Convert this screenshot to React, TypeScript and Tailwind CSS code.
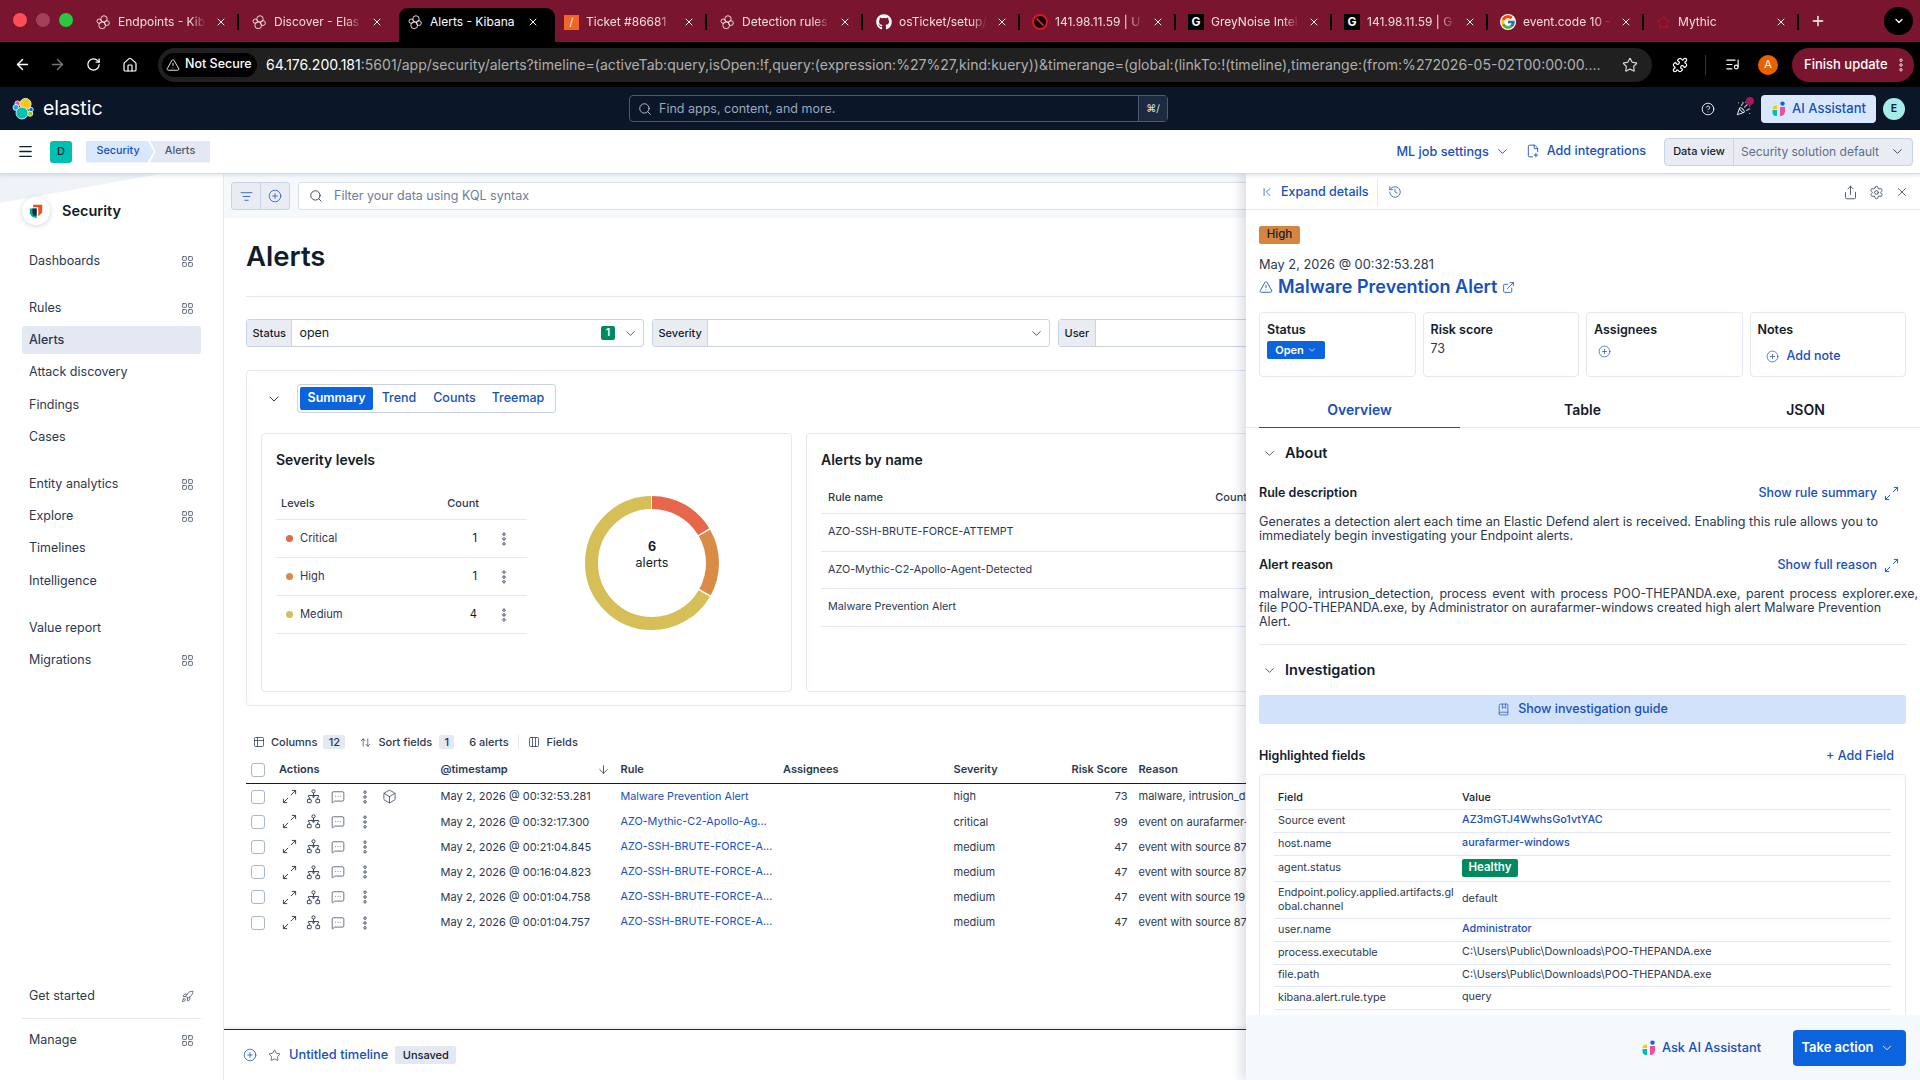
import { ReactNode } from "react";
import {
  AlertTriangle,
  ArrowDown,
  ArrowLeft,
  ArrowRight,
  ArrowUpDown,
  BookMarked,
  Box,
  ChevronDown,
  ChevronFirst,
  CircleHelp,
  CirclePlus,
  Columns3,
  ExternalLink,
  FilePlus2,
  History,
  Home,
  LayoutGrid,
  ListFilter,
  ListMusic,
  Menu,
  MessageSquareMore,
  PartyPopper,
  Plus,
  Puzzle,
  RotateCw,
  Rocket,
  Search,
  Settings,
  Share,
  Star,
  Table2,
  X,
} from "lucide-react";
import { FaGithub } from "react-icons/fa";
import { FcGoogle } from "react-icons/fc";

function Dots({ className = "" }: { className?: string }) {
  return (
    <svg viewBox="0 0 6 16" className={`h-[14px] w-[6px] ${className}`} fill="none" stroke="currentColor" strokeWidth="1">
      <circle cx="3" cy="2.5" r="1.4" />
      <circle cx="3" cy="8" r="1.4" />
      <circle cx="3" cy="13.5" r="1.4" />
    </svg>
  );
}

function ExpandIcon({ className = "" }: { className?: string }) {
  return (
    <svg viewBox="0 0 16 16" className={`h-[15px] w-[15px] ${className}`} fill="none" stroke="currentColor" strokeWidth="1">
      <path d="M9.5 6.5 14.5 1.5M10.5 1.5h4v4M6.5 9.5l-5 5M1.5 10.5v4h4" />
    </svg>
  );
}

function AnalyzeIcon() {
  return (
    <svg viewBox="0 0 16 16" className="h-[15px] w-[15px]" fill="none" stroke="currentColor" strokeWidth="1">
      <circle cx="8" cy="2.5" r="1.7" />
      <path d="M8 4.2v2.6M2.5 8.5V7h11v1.5" />
      <circle cx="8" cy="8.2" r=".8" />
      <rect x="1.5" y="11" width="4" height="3.6" rx=".6" />
      <rect x="10.5" y="11" width="4" height="3.6" rx=".6" />
      <path d="M3.5 8.6V11M12.5 8.6V11" />
    </svg>
  );
}

function ElasticTabIcon() {
  return (
    <svg viewBox="0 0 16 16" className="h-[15px] w-[15px] shrink-0 text-[#f3dfe5]" fill="none" stroke="currentColor" strokeWidth="1">
      <circle cx="8.5" cy="4.2" r="3.4" />
      <circle cx="3.4" cy="6.6" r="2.3" />
      <circle cx="11.6" cy="8.6" r="2.6" />
      <circle cx="6.6" cy="11" r="3.6" />
    </svg>
  );
}

function ElasticLogo() {
  return (
    <svg viewBox="0 0 24 26" className="h-[26px] w-[24px]" stroke="#ffffff" strokeWidth=".8">
      <circle cx="5.5" cy="7.5" r="2.6" fill="#f04e98" />
      <circle cx="4" cy="11.5" r="3" fill="#1ba9f5" />
      <circle cx="18" cy="17.5" r="2.8" fill="#93c90e" />
      <circle cx="19" cy="13.5" r="2.2" fill="#0077cc" />
      <circle cx="13.5" cy="8" r="5.6" fill="#fec514" />
      <circle cx="10" cy="17" r="6" fill="#00bfb3" />
    </svg>
  );
}

function SecurityLogo() {
  return (
    <svg viewBox="40 36 42 46" className="h-[15px] w-[14px]">
      <path d="M52 38H80V62L68 74V46H52Z" fill="#f04e23" />
      <path d="M42 50H63V80L48 74 42 64Z" fill="#00a69b" />
      <path d="M50 50H63V72H53L50 62Z" fill="#1d2a3e" />
    </svg>
  );
}

function AiIcon() {
  return (
    <svg viewBox="0 0 16 16" className="h-[16px] w-[16px] shrink-0">
      <circle cx="11.5" cy="2.6" r="2.2" fill="#0b64dd" />
      <path d="M1.5 8c0-2 1.3-3.6 3.4-3.6H6V8z" fill="#fec514" />
      <path d="M1.5 9H6v6H4.7c-1.8 0-3.2-1.4-3.2-3.2z" fill="#00bfb3" />
      <path d="M9 6h5v4.5a4.5 4.5 0 0 1-4.5 4.5H9z" fill="#f04e98" />
    </svg>
  );
}

const browserTabs = [
  { title: "Endpoints - Kib", icon: <ElasticTabIcon />, sep: true },
  { title: "Discover - Elas", icon: <ElasticTabIcon /> },
  { title: "Alerts - Kibana", icon: <ElasticTabIcon />, active: true },
  { title: "Ticket #86681", icon: <div className="h-[15px] w-[15px] shrink-0 bg-[#f26522] text-center text-[11px] leading-[15px] text-white">/</div>, sep: true },
  { title: "Detection rules", icon: <ElasticTabIcon />, sep: true },
  { title: "osTicket/setup/", icon: <FaGithub className="h-[16px] w-[16px] shrink-0 text-white" />, sep: true },
  { title: "141.98.11.59 | U", icon: <div className="flex h-[16px] w-[16px] shrink-0 items-center justify-center rounded-full border-2 border-[#e0161d] bg-black"><div className="h-[2px] w-[10px] rotate-45 bg-[#e0161d]" /></div>, sep: true },
  { title: "GreyNoise Intel", icon: <div className="h-[16px] w-[16px] shrink-0 bg-black text-center text-[12px] font-bold leading-[16px] text-white">G</div>, sep: true },
  { title: "141.98.11.59 | G", icon: <div className="h-[16px] w-[16px] shrink-0 bg-black text-center text-[12px] font-bold leading-[16px] text-white">G</div>, sep: true },
  { title: "event.code 10 -", icon: <FcGoogle className="h-[16px] w-[16px] shrink-0 rounded-full bg-white" />, sep: true },
  { title: "Mythic", icon: <Star className="h-[15px] w-[15px] shrink-0 text-[#b3142e]" strokeWidth={1.5} />, sep: true },
];

function TabStrip() {
  return (
    <div className="flex h-[42px] shrink-0 items-center bg-[#7a1530] pl-[13px]">
      <div className="flex w-[74px] shrink-0 items-center gap-[9px] pb-[2px]">
        <div className="h-[14px] w-[14px] rounded-full bg-[#ff4d57]" />
        <div className="h-[14px] w-[14px] rounded-full bg-[#a2405c]" />
        <div className="h-[14px] w-[14px] rounded-full bg-[#28c840]" />
      </div>
      {browserTabs.map((t, i) => (
        <div
          key={i}
          className={`flex h-[34px] w-[156px] shrink-0 items-center self-end pb-[6px] pl-[9px] pr-[3px] text-[12px] ${t.active ? "rounded-t-[9px] bg-black text-white" : "text-[#f2dde3]"}`}
        >
          {t.icon}
          <span className={`ml-[7px] w-[88px] overflow-hidden whitespace-nowrap ${t.active ? "" : "[mask-image:linear-gradient(to_right,black_82%,transparent)]"}`}>{t.title}</span>
          <X className="ml-[9px] h-[12px] w-[12px] shrink-0 text-white" strokeWidth={2} />
          <div className={`ml-[10px] h-[16px] w-[1.5px] shrink-0 ${t.sep ? "bg-black" : ""}`} />
        </div>
      ))}
      <Plus className="ml-[7px] h-[16px] w-[16px] text-white" strokeWidth={2} />
      <div className="ml-[58px] flex h-[28px] w-[29px] shrink-0 items-center justify-center rounded-full bg-black">
        <ChevronDown className="h-[12px] w-[12px] text-white" strokeWidth={2.5} />
      </div>
    </div>
  );
}

function Toolbar() {
  return (
    <div className="flex h-[45px] shrink-0 items-center bg-black pl-[14px] pr-[6px]">
      <ArrowLeft className="h-[17px] w-[17px] text-white" strokeWidth={2} />
      <ArrowRight className="ml-[18px] h-[17px] w-[17px] text-[#777]" strokeWidth={2} />
      <RotateCw className="ml-[20px] h-[15px] w-[15px] text-white" strokeWidth={2} />
      <Home className="ml-[21px] h-[16px] w-[16px] text-white" strokeWidth={1.8} />
      <div className="ml-[20px] flex h-[34px] w-[1494px] items-center rounded-full bg-[#202020] pl-[4px] pr-[14px]">
        <div className="flex h-[24px] w-[95px] shrink-0 items-center gap-[5px] rounded-full bg-black pl-[4px] text-[12.5px] font-medium text-white">
          <AlertTriangle className="h-[14px] w-[14px]" strokeWidth={1.5} />
          Not Secure
        </div>
        <div className="ml-[9px] flex-1 overflow-hidden whitespace-nowrap text-[14.05px] text-[#aeaeae]">
          <span className="text-white">64.176.200.181</span>:5601/app/security/alerts?timeline=(activeTab:query,isOpen:!f,query:(expression:%27%27,kind:kuery))&amp;timerange=(global:(linkTo:!(timeline),timerange:(from:%272026-05-02T00:00:00....
        </div>
        <Star className="ml-[16px] h-[16px] w-[16px] shrink-0 text-[#d0d0d0]" strokeWidth={1.8} />
      </div>
      <Puzzle className="ml-[20px] h-[16px] w-[16px] text-white" strokeWidth={1.8} />
      <div className="ml-[17px] h-[20px] w-px bg-[#7a1530]" />
      <ListMusic className="ml-[19px] h-[15px] w-[15px] text-white" strokeWidth={1.8} />
      <div className="ml-[18px] flex h-[20px] w-[20px] items-center justify-center rounded-full bg-[#ea6100] text-[11px] text-white">A</div>
      <div className="ml-[14px] flex h-[34px] w-[122px] items-center justify-between rounded-full bg-[#7a1530] pl-[12px] pr-[10px] text-[13px] font-medium text-white">
        Finish update
        <Dots className="text-white" />
      </div>
    </div>
  );
}

function ElasticHeader() {
  return (
    <div className="flex h-[43px] shrink-0 items-center bg-[#0b1628] pl-[12px] pr-[14px]">
      <div className="flex w-[617px] shrink-0 items-center gap-[7px]">
        <ElasticLogo />
        <span className="text-[19.5px] leading-none text-white">elastic</span>
      </div>
      <div className="flex h-[27px] w-[539px] items-center rounded-[4px] border border-[#4a5a75] bg-[#0b1628] pl-[8px] text-[12.5px] text-[#9aa8bd]">
        <Search className="h-[14px] w-[14px] text-[#c3ccd9]" strokeWidth={1.5} />
        <span className="ml-[7px] flex-1 pt-[1px]">Find apps, content, and more.</span>
        <div className="flex h-full w-[29px] items-center justify-center border-l border-[#4a5a75] bg-[#1d2a3f] text-[10px] text-[#dfe5ef]">⌘/</div>
      </div>
      <CircleHelp className="ml-[533px] h-[14px] w-[14px] text-white" strokeWidth={1.5} />
      <div className="relative ml-[21px]">
        <PartyPopper className="h-[15px] w-[15px] text-white" strokeWidth={1.5} />
        <div className="absolute -right-[3px] -top-[4px] h-[8px] w-[8px] rounded-full bg-[#a6175a]" />
      </div>
      <div className="ml-[10px] flex h-[28px] w-[115px] items-center justify-center gap-[5px] rounded-[4px] bg-[#d9e8ff] text-[13px] font-medium text-[#1750ba]">
        <AiIcon />
        AI Assistant
      </div>
      <div className="ml-[7px] flex h-[22px] w-[22px] items-center justify-center rounded-full bg-[#a6edea] text-[10.5px] font-semibold text-[#111c2c]">E</div>
    </div>
  );
}

function BreadcrumbBar() {
  return (
    <div className="relative z-10 flex h-[44px] shrink-0 items-center border-b border-[#d3dae6] bg-white pl-[17px] pr-[7px] shadow-[0_2px_3px_rgba(60,80,120,0.12)]">
      <Menu className="h-[17px] w-[17px] text-[#111c2c]" strokeWidth={1.8} />
      <div className="ml-[16px] flex h-[22px] w-[22px] items-center justify-center rounded-[3px] bg-[#00bfb3] text-[11px] font-medium text-[#111c2c]">D</div>
      <div className="ml-[14px] flex h-[22px] w-[68px] items-center justify-center bg-[#d9e8ff] pr-[4px] text-[10.8px] font-medium text-[#1750ba] [clip-path:polygon(0_0,90%_0,100%_50%,90%_100%,0_100%)]">Security</div>
      <div className="-ml-[4px] flex h-[22px] w-[60px] items-center justify-center bg-[#e3e8f2] text-[10.8px] font-medium text-[#485975] [clip-path:polygon(0_0,100%_0,100%_100%,0_100%,9%_50%)]">Alerts</div>
      <div className="ml-auto flex items-center text-[12.7px] font-medium text-[#1750ba]">
        ML job settings
        <ChevronDown className="ml-[6px] h-[15px] w-[15px]" strokeWidth={1.5} />
        <FilePlus2 className="ml-[16px] h-[14px] w-[14px]" strokeWidth={1.5} />
        <span className="ml-[7px] text-[12.6px]">Add integrations</span>
      </div>
      <div className="ml-[18px] flex h-[28px] w-[249px] items-center rounded-[4px] border border-[#cad3e2] bg-[#e9edf3] text-[12px]">
        <div className="flex h-full w-[69px] items-center justify-center border-r border-[#cad3e2] text-[11px] font-medium text-[#111c2c]">Data view</div>
        <span className="ml-[7px] flex-1 whitespace-nowrap text-[#5a6d8c]">Security solution default</span>
        <ChevronDown className="mr-[7px] h-[15px] w-[15px] text-[#344054]" strokeWidth={1.5} />
      </div>
    </div>
  );
}

function NavItem({ label, grid, active, icon }: { label: string; grid?: boolean; active?: boolean; icon?: ReactNode }) {
  return (
    <div className={`mx-[22px] flex h-[32.3px] items-center justify-between pl-[7px] pr-[7px] text-[12.5px] text-[#2b394f] ${active ? "relative" : ""}`}>
      {active && <div className="absolute inset-x-0 top-[2px] h-[28px] rounded-[3px] bg-[#e3e8f2]" />}
      <span className={active ? "relative font-medium" : ""}>{label}</span>
      {grid && <LayoutGrid className="h-[13px] w-[13px] text-[#2b394f]" strokeWidth={1.3} />}
      {icon}
    </div>
  );
}

function Sidebar() {
  return (
    <div className="relative flex h-full w-[224px] shrink-0 flex-col border-r border-[#e3e8f2] bg-white">
      <svg viewBox="0 0 160 30" className="absolute left-0 top-0 h-[30px] w-[160px]">
        <polygon points="0,0 159,0 0,29" fill="#eff2f7" />
      </svg>
      <div className="relative mt-[23px] flex h-[28px] items-center pl-[22px]">
        <div className="flex h-[28px] w-[28px] items-center justify-center rounded-full bg-white shadow-[0_1px_5px_rgba(60,80,120,0.25)]">
          <SecurityLogo />
        </div>
        <span className="ml-[12px] text-[14.5px] font-semibold text-[#111c2c]">Security</span>
      </div>
      <div className="mt-[20px] flex flex-col gap-[14.6px]">
        <div>
          <NavItem label="Dashboards" grid />
        </div>
        <div>
          <NavItem label="Rules" grid />
          <NavItem label="Alerts" active />
          <NavItem label="Attack discovery" />
          <NavItem label="Findings" />
          <NavItem label="Cases" />
        </div>
        <div>
          <NavItem label="Entity analytics" grid />
          <NavItem label="Explore" grid />
          <NavItem label="Timelines" />
          <NavItem label="Intelligence" />
        </div>
        <div>
          <NavItem label="Value report" />
          <NavItem label="Migrations" grid />
        </div>
      </div>
      <div className="mt-auto pb-[23px]">
        <NavItem label="Get started" icon={<Rocket className="h-[13px] w-[13px] text-[#2b394f]" strokeWidth={1.3} />} />
        <div className="mx-[22px] my-[5.5px] h-px bg-[#e3e8f2]" />
        <NavItem label="Manage" grid />
      </div>
    </div>
  );
}

function FilterSelect({ label, value, count }: { label: string; value?: string; count?: number }) {
  return (
    <div className="flex h-[28px] w-[398px] shrink-0 items-center rounded-[3px] border border-[#cad3e2] bg-white">
      <div className="flex h-full shrink-0 items-center border-r border-[#cad3e2] bg-[#e9edf3] px-[5.5px] text-[11px] font-medium text-[#111c2c]">{label}</div>
      <span className="ml-[7px] flex-1 text-[12.5px] text-[#111c2c]">{value}</span>
      {count && <div className="mr-[8px] flex h-[14px] w-[14px] items-center justify-center rounded-[2px] bg-[#008a5e] text-[10.5px] font-semibold text-white">{count}</div>}
      <ChevronDown className="mr-[5px] h-[15px] w-[15px] text-[#2b394f]" strokeWidth={1.3} />
    </div>
  );
}

const levels = [
  { name: "Critical", count: 1, color: "bg-[#e7664c]" },
  { name: "High", count: 1, color: "bg-[#da8b45]" },
  { name: "Medium", count: 4, color: "bg-[#d6bf57]" },
];

function Donut() {
  const r = 60.5;
  const c = 2 * Math.PI * r;
  const segs = [
    { from: 0, size: 1 / 6, color: "#e7664c" },
    { from: 1 / 6, size: 1 / 6, color: "#da8b45" },
    { from: 2 / 6, size: 4 / 6, color: "#d6bf57" },
  ];
  return (
    <div className="relative h-[134px] w-[134px]">
      <svg viewBox="0 0 134 134" className="h-[134px] w-[134px] -rotate-90">
        {segs.map((s) => (
          <circle
            key={s.color}
            cx="67"
            cy="67"
            r={r}
            fill="none"
            stroke={s.color}
            strokeWidth="13"
            strokeDasharray={`${s.size * c - 1.5} ${c}`}
            strokeDashoffset={-s.from * c}
          />
        ))}
      </svg>
      <div className="absolute inset-0 flex flex-col items-center justify-center pb-[17px] text-[#111c2c]">
        <span className="text-[12.5px] font-bold leading-[16px]">6</span>
        <span className="text-[12.5px] leading-[16px]">alerts</span>
      </div>
    </div>
  );
}

function SeverityPanel() {
  return (
    <div className="flex h-[259px] w-[531px] shrink-0 rounded-[4px] border border-[#e3e8f2] pl-[14px] pr-[14px]">
      <div className="w-[251px] shrink-0">
        <div className="mt-[16px] text-[14px] font-semibold leading-[20px] text-[#111c2c]">Severity levels</div>
        <div className="mt-[21px] flex h-[29px] items-center border-b border-[#e3e8f2] pb-[4px] text-[11px] font-medium text-[#2b394f]">
          <span className="ml-[5px] flex-1">Levels</span>
          <span className="mr-[48px]">Count</span>
        </div>
        {levels.map((l) => (
          <div key={l.name} className="flex h-[38px] items-center border-b border-[#e3e8f2] text-[11.2px] text-[#2b394f]">
            <div className={`ml-[10px] h-[7px] w-[7px] rounded-full ${l.color}`} />
            <span className="ml-[7px] flex-1">{l.name}</span>
            <span className="mr-[24px] text-[#111c2c]">{l.count}</span>
            <Dots className="mr-[20px] text-[#2b394f]" />
          </div>
        ))}
      </div>
      <div className="ml-[58px] mt-[62px]">
        <Donut />
      </div>
    </div>
  );
}

const ruleNames = ["AZO-SSH-BRUTE-FORCE-ATTEMPT", "AZO-Mythic-C2-Apollo-Agent-Detected", "Malware Prevention Alert"];

function AlertsByName() {
  return (
    <div className="h-[259px] w-[560px] shrink-0 rounded-[4px] border border-[#e3e8f2] pl-[14px] pr-[14px]">
      <div className="mt-[16px] text-[14px] font-semibold leading-[20px] text-[#111c2c]">Alerts by name</div>
      <div className="mt-[16px] flex h-[28px] items-center justify-between border-b border-[#e3e8f2] pb-[4px] pl-[7px] text-[11px] font-medium text-[#2b394f]">
        <span>Rule name</span>
        <span className="mr-[104px]">Count</span>
      </div>
      {ruleNames.map((n) => (
        <div key={n} className="flex h-[37.5px] items-center border-b border-[#e3e8f2] pl-[7px] text-[10.8px] text-[#2b394f]">
          {n}
        </div>
      ))}
    </div>
  );
}

const rows = [
  { time: "May 2, 2026 @ 00:32:53.281", rule: "Malware Prevention Alert", sev: "high", score: 73, reason: "malware, intrusion_d", extra: true },
  { time: "May 2, 2026 @ 00:32:17.300", rule: "AZO-Mythic-C2-Apollo-Ag...", sev: "critical", score: 99, reason: "event on aurafarmer-" },
  { time: "May 2, 2026 @ 00:21:04.845", rule: "AZO-SSH-BRUTE-FORCE-A...", sev: "medium", score: 47, reason: "event with source 87" },
  { time: "May 2, 2026 @ 00:16:04.823", rule: "AZO-SSH-BRUTE-FORCE-A...", sev: "medium", score: 47, reason: "event with source 87" },
  { time: "May 2, 2026 @ 00:01:04.758", rule: "AZO-SSH-BRUTE-FORCE-A...", sev: "medium", score: 47, reason: "event with source 19" },
  { time: "May 2, 2026 @ 00:01:04.757", rule: "AZO-SSH-BRUTE-FORCE-A...", sev: "medium", score: 47, reason: "event with source 87" },
];

function Checkbox() {
  return <div className="ml-[5px] h-[14px] w-[14px] shrink-0 rounded-[3px] border border-[#aab6c9] bg-white" />;
}

function IconCell({ children, className = "" }: { children: ReactNode; className?: string }) {
  return <div className={`flex w-[24.5px] shrink-0 justify-center ${className}`}>{children}</div>;
}

function AlertsTable() {
  return (
    <div className="mt-[29px] text-[11px] text-[#111c2c]">
      <div className="flex h-[14px] items-center pl-[7px] font-medium text-[#2b394f]">
        <Table2 className="h-[12px] w-[12px]" strokeWidth={1.5} />
        <span className="ml-[6px]">Columns</span>
        <span className="ml-[6px] flex h-[14px] w-[22px] items-center justify-center rounded-[2px] bg-[#e3e8f2]">12</span>
        <ArrowUpDown className="ml-[15px] h-[11px] w-[11px]" strokeWidth={1.5} />
        <span className="ml-[7px]">Sort fields</span>
        <span className="ml-[7px] flex h-[14px] w-[15px] items-center justify-center rounded-[2px] bg-[#e3e8f2]">1</span>
        <span className="ml-[15px]">6 alerts</span>
        <div className="ml-[9px] h-[14px] w-px bg-[#e3e8f2]" />
        <Columns3 className="ml-[9px] h-[12px] w-[12px]" strokeWidth={1.5} />
        <span className="ml-[7px]">Fields</span>
      </div>
      <div className="mt-[7px] flex h-[28px] items-center border-b-[1.5px] border-[#111c2c] font-semibold text-[#2b394f]">
        <Checkbox />
        <div className="ml-[14px] w-[161.5px] shrink-0">Actions</div>
        <div className="flex w-[180px] shrink-0 items-center justify-between pr-[11px]">
          @timestamp
          <ArrowDown className="h-[13px] w-[13px]" strokeWidth={1.5} />
        </div>
        <div className="w-[162.5px] shrink-0">Rule</div>
        <div className="w-[170.5px] shrink-0">Assignees</div>
        <div className="w-[114px] shrink-0">Severity</div>
        <div className="w-[60px] shrink-0 whitespace-nowrap text-right">Risk Score</div>
        <div className="ml-[11px]">Reason</div>
      </div>
      {rows.map((r) => (
        <div key={r.time} className="flex h-[25.2px] items-center text-[#2b394f]">
          <Checkbox />
          <div className="ml-[12px] flex w-[163.5px] shrink-0 items-center">
            <IconCell><ExpandIcon className="w-[13px]" /></IconCell>
            <IconCell><AnalyzeIcon /></IconCell>
            <IconCell><MessageSquareMore className="h-[14px] w-[14px]" strokeWidth={1.2} /></IconCell>
            <IconCell className="ml-[2px]"><Dots /></IconCell>
            {r.extra && <IconCell><Box className="h-[15px] w-[15px]" strokeWidth={1.2} /></IconCell>}
          </div>
          <div className="w-[180px] shrink-0">{r.time}</div>
          <div className="w-[162.5px] shrink-0 whitespace-nowrap text-[10.8px] text-[#1750ba]">{r.rule}</div>
          <div className="w-[170.5px] shrink-0" />
          <div className="w-[114px] shrink-0">{r.sev}</div>
          <div className="w-[60px] shrink-0 text-right">{r.score}</div>
          <div className="ml-[11px] whitespace-nowrap">{r.reason}</div>
        </div>
      ))}
    </div>
  );
}

function MainContent() {
  return (
    <div className="flex h-full min-w-0 flex-1 flex-col overflow-hidden">
      <div className="flex h-[44px] shrink-0 items-center bg-[#f6f9fc] pl-[7px]">
        <div className="flex h-[28px] w-[59px] items-center rounded-[3px] border border-[#cad3e2] bg-[#e9edf3] text-[#1750ba]">
          <div className="flex h-full w-[29px] items-center justify-center border-r border-[#cad3e2]">
            <ListFilter className="h-[13px] w-[13px]" strokeWidth={1.5} />
          </div>
          <div className="flex flex-1 items-center justify-center">
            <CirclePlus className="h-[14px] w-[14px]" strokeWidth={1.3} />
          </div>
        </div>
        <div className="ml-[8px] flex h-[28px] flex-1 items-center rounded-[3px] border border-[#d9e0ea] bg-white pl-[10px]">
          <Search className="h-[14px] w-[14px] text-[#2b394f]" strokeWidth={1.5} />
          <span className="ml-[11px] text-[12.5px] text-[#6c7d98]">Filter your data using KQL syntax</span>
        </div>
      </div>
      <div className="flex-1 pl-[22px] pr-[18px]">
        <h1 className="mt-[22px] text-[27.5px] font-semibold leading-[32px] text-[#111c2c]">Alerts</h1>
        <div className="mt-[24px] h-px bg-[#e3e8f2]" />
        <div className="mt-[22px] flex gap-[8px]">
          <FilterSelect label="Status" value="open" count={1} />
          <FilterSelect label="Severity" />
          <FilterSelect label="User" />
        </div>
        <div className="mt-[23px] h-[336px] rounded-[4px] border border-[#e3e8f2] pl-[14px]">
          <div className="mt-[13px] flex items-center">
            <ChevronDown className="ml-[5px] h-[16px] w-[16px] text-[#111c2c]" strokeWidth={1.3} />
            <div className="ml-[15px] flex h-[29px] items-center rounded-[3px] border border-[#cad3e2] p-[2px] pr-[3px] text-[12.5px] font-medium text-[#1750ba]">
              <div className="flex h-full w-[73px] items-center justify-center rounded-[2px] bg-[#0b64dd] font-semibold text-white">Summary</div>
              <div className="flex h-full w-[52px] items-center justify-center">Trend</div>
              <div className="flex h-[23px] w-[59px] items-center justify-center">Counts</div>
              <div className="flex h-[23px] w-[68px] items-center justify-center">Treemap</div>
            </div>
          </div>
          <div className="mt-[20px] flex gap-[14px]">
            <SeverityPanel />
            <AlertsByName />
          </div>
        </div>
        <AlertsTable />
      </div>
      <div className="flex h-[51px] shrink-0 items-center border-t-[1.5px] border-[#1d2a3e] bg-white pl-[19px] text-[12.8px] shadow-[0_-2px_3px_rgba(60,80,120,0.1)]">
        <CirclePlus className="h-[14px] w-[14px] text-[#1750ba]" strokeWidth={1.3} />
        <Star className="ml-[11px] h-[13px] w-[13px] text-[#2b394f]" strokeWidth={1.3} />
        <span className="ml-[8px] font-medium text-[#1750ba]">Untitled timeline</span>
        <span className="ml-[7px] flex h-[18px] w-[61px] items-center justify-center rounded-[2px] bg-[#e3e8f2] text-[11px] font-medium text-[#111c2c]">Unsaved</span>
      </div>
    </div>
  );
}

const highlighted: { field: ReactNode; value: ReactNode; link?: boolean; h: string }[] = [
  { field: "Source event", value: "AZ3mGTJ4WwhsGo1vtYAC", link: true, h: "h-[23px]" },
  { field: "host.name", value: "aurafarmer-windows", link: true, h: "h-[23px]" },
  { field: "agent.status", value: <span className="flex h-[18px] w-[56px] items-center justify-center rounded-[2px] bg-[#008a5e] text-[11.5px] font-semibold text-white">Healthy</span>, h: "h-[26px]" },
  { field: <span className="break-all">Endpoint.policy.applied.artifacts.global.channel</span>, value: "default", h: "h-[37px]" },
  { field: "user.name", value: "Administrator", link: true, h: "h-[23px]" },
  { field: "process.executable", value: "C:\\Users\\Public\\Downloads\\POO-THEPANDA.exe", h: "h-[23px]" },
  { field: "file.path", value: "C:\\Users\\Public\\Downloads\\POO-THEPANDA.exe", h: "h-[22px]" },
  { field: "kibana.alert.rule.type", value: "query", h: "h-[23px]" },
];

function InfoCard({ title, children }: { title: string; children: ReactNode }) {
  return (
    <div className="h-[65px] flex-1 rounded-[4px] border border-[#e3e8f2] pl-[7px] pt-[9px]">
      <div className="text-[12.5px] font-semibold leading-[16px] text-[#111c2c]">{title}</div>
      {children}
    </div>
  );
}

function SectionToggle({ title }: { title: string }) {
  return (
    <div className="flex items-center text-[14.5px] font-semibold leading-[20px] text-[#111c2c]">
      <ChevronDown className="ml-[3px] h-[15px] w-[15px] text-[#2b394f]" strokeWidth={1.3} />
      <span className="ml-[8px]">{title}</span>
    </div>
  );
}

function FieldHeader({ title, action }: { title: string; action: string }) {
  return (
    <div className="flex items-center justify-between pr-[7px] text-[12.5px] leading-[16px]">
      <span className="font-semibold text-[#111c2c]">{title}</span>
      <span className="flex items-center font-medium text-[#1750ba]">
        {action}
        <ExpandIcon className="ml-[7px]" />
      </span>
    </div>
  );
}

function Flyout() {
  return (
    <div className="absolute inset-y-0 right-0 flex w-[674px] flex-col bg-white shadow-[-5px_0_10px_rgba(60,80,120,0.18)]">
      <div className="flex h-[36px] shrink-0 items-center border-b border-[#e3e8f2] pl-[14px] pr-[11px] pt-[1px] text-[12.5px] font-medium text-[#1750ba]">
        <ChevronFirst className="h-[14px] w-[14px]" strokeWidth={1.3} />
        <span className="ml-[7px]">Expand details</span>
        <div className="ml-[8px] h-[28px] w-px bg-[#e3e8f2]" />
        <History className="ml-[10px] h-[14px] w-[14px]" strokeWidth={1.3} />
        <Share className="ml-auto h-[15px] w-[15px] text-[#2b394f]" strokeWidth={1.3} />
        <Settings className="ml-[11px] h-[15px] w-[15px] text-[#2b394f]" strokeWidth={1.3} />
        <X className="ml-[11px] h-[14px] w-[14px] text-[#2b394f]" strokeWidth={1.3} />
      </div>
      <div className="flex-1 overflow-hidden">
        <div className="pl-[13px] pr-[14px] pt-[16px]">
          <div className="flex h-[18px] w-[41px] items-center justify-center rounded-[2px] bg-[#d6853e] text-[11.5px] font-medium text-[#111c2c]">High</div>
          <div className="mt-[13px] text-[12.8px] leading-[16px] text-[#2b394f]">May 2, 2026 @ 00:32:53.281</div>
          <div className="mt-[2px] flex items-center text-[18px] font-semibold leading-[24px] text-[#1750ba]">
            <AlertTriangle className="h-[14px] w-[14px]" strokeWidth={1.5} />
            <span className="ml-[5px]">Malware Prevention Alert</span>
            <ExternalLink className="ml-[5px] h-[13px] w-[13px]" strokeWidth={1.5} />
          </div>
          <div className="mt-[13px] flex gap-[7px]">
            <InfoCard title="Status">
              <div className="mt-[3px] flex h-[18px] w-[58px] items-center justify-center gap-[3px] rounded-[2px] bg-[#0b64dd] text-[11px] font-semibold text-white">
                Open
                <ChevronDown className="h-[10px] w-[10px]" strokeWidth={1.8} />
              </div>
            </InfoCard>
            <InfoCard title="Risk score">
              <div className="mt-[3px] text-[12.5px] leading-[16px] text-[#2b394f]">73</div>
            </InfoCard>
            <InfoCard title="Assignees">
              <CirclePlus className="ml-[4px] mt-[7px] h-[13px] w-[13px] text-[#1750ba]" strokeWidth={1.3} />
            </InfoCard>
            <InfoCard title="Notes">
              <div className="ml-[8px] mt-[9px] flex items-center text-[12.5px] font-medium text-[#1750ba]">
                <CirclePlus className="h-[13px] w-[13px]" strokeWidth={1.3} />
                <span className="ml-[8px]">Add note</span>
              </div>
            </InfoCard>
          </div>
        </div>
        <div className="mt-[22px] flex h-[29px] gap-[22px] border-b border-[#e3e8f2] pl-[13px] text-[14px] font-semibold text-[#111c2c]">
          <div className="flex h-[29px] w-[201px] items-start justify-center border-b-[1.5px] border-[#1750ba] text-[#1750ba]">Overview</div>
          <div className="flex h-[29px] w-[201px] items-start justify-center">Table</div>
          <div className="flex h-[29px] w-[201px] items-start justify-center">JSON</div>
        </div>
        <div className="pl-[13px] pr-[14px]">
          <div className="mt-[15px]"><SectionToggle title="About" /></div>
          <div className="mt-[22px]"><FieldHeader title="Rule description" action="Show rule summary" /></div>
          <p className="mt-[14px] text-[12.6px] leading-[14px] text-[#2b394f]">
            Generates a detection alert each time an Elastic Defend alert is received. Enabling this rule allows you to immediately begin investigating your Endpoint alerts.
          </p>
          <div className="mt-[14px]"><FieldHeader title="Alert reason" action="Show full reason" /></div>
          <p className="mt-[14px] whitespace-nowrap text-[12.5px] leading-[14px] text-[#2b394f]">
            <span className="[word-spacing:2px]">malware, intrusion_detection, process event with process POO-THEPANDA.exe, parent process explorer.exe,</span>
            <br />
            file POO-THEPANDA.exe, by Administrator on aurafarmer-windows created high alert Malware Prevention
            <br />
            Alert.
          </p>
          <div className="mt-[15px] h-px bg-[#e3e8f2]" />
          <div className="mt-[15px]"><SectionToggle title="Investigation" /></div>
          <div className="mt-[15px] flex h-[29px] items-center justify-center gap-[8px] rounded-[3px] bg-[#d3e2fb] text-[12.5px] font-medium text-[#1750ba]">
            <BookMarked className="h-[13px] w-[13px]" strokeWidth={1.3} />
            Show investigation guide
          </div>
          <div className="mt-[24px] flex items-center justify-between pr-[12px] text-[12.5px] leading-[16px]">
            <span className="font-semibold text-[#111c2c]">Highlighted fields</span>
            <span className="font-medium text-[#1750ba]">+ Add Field</span>
          </div>
          <div className="mt-[10px] rounded-[4px] border border-[#e3e8f2] px-[14px] pb-[10px] pt-[12px] text-[10.8px] text-[#2b394f]">
            <div className="flex h-[22.5px] items-start border-b border-[#e3e8f2] pt-[3px] font-medium text-[#111c2c]">
              <span className="ml-[4px] w-[184px]">Field</span>
              <span>Value</span>
            </div>
            {highlighted.map((f, i) => (
              <div key={i} className={`flex items-center border-b border-[#e3e8f2] ${f.h}`}>
                <div className="ml-[4px] w-[179px] shrink-0 leading-[14px]">{f.field}</div>
                <div className={`ml-[5px] ${f.link ? "font-medium text-[#1750ba]" : ""}`}>{f.value}</div>
              </div>
            ))}
          </div>
        </div>
      </div>
      <div className="flex h-[65px] shrink-0 items-center justify-end bg-[#f6f9fc] pr-[14px] text-[12.8px] font-medium">
        <AiIcon />
        <span className="ml-[5px] text-[#1750ba]">Ask AI Assistant</span>
        <div className="ml-[32px] flex h-[36px] w-[113px] items-center justify-center gap-[6px] rounded-[4px] bg-[#0b64dd] pr-[4px] text-[13px] font-semibold text-white">
          Take action
          <ChevronDown className="h-[14px] w-[14px]" strokeWidth={1.5} />
        </div>
      </div>
    </div>
  );
}

export default function App() {
  return (
    <div className="flex h-[1080px] w-[1920px] flex-col overflow-hidden bg-white font-['Inter',sans-serif]">
      <TabStrip />
      <Toolbar />
      <ElasticHeader />
      <BreadcrumbBar />
      <div className="relative flex min-h-0 flex-1">
        <Sidebar />
        <MainContent />
        <Flyout />
      </div>
    </div>
  );
}
